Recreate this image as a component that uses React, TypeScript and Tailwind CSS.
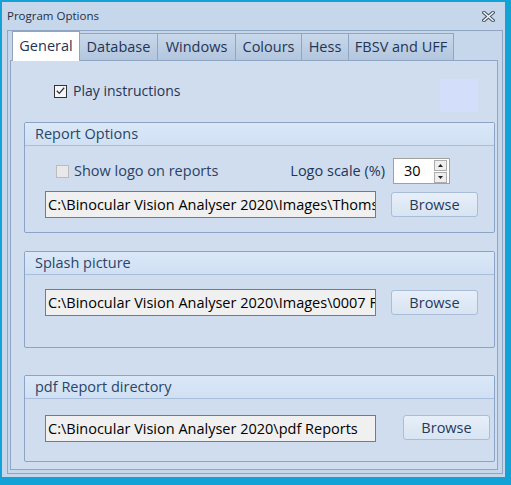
import type { ReactNode } from 'react'

function CloseGlyph() {
  return (
    <svg width="13" height="11" viewBox="0 0 13 11">
      <path d="M2 1.5 L11 9.5 M11 1.5 L2 9.5" stroke="#4d586c" strokeWidth="3.6" strokeLinecap="square" />
      <path d="M2 1.5 L11 9.5 M11 1.5 L2 9.5" stroke="#f4f6fa" strokeWidth="1.5" strokeLinecap="square" />
    </svg>
  )
}

function CheckBox({ checked, disabled }: { checked?: boolean; disabled?: boolean }) {
  return (
    <span
      className={`flex h-[13px] w-[13px] shrink-0 items-center justify-center border ${
        disabled ? 'border-[#bcbcbc] bg-[#e8e8e8]' : 'border-[#333333] bg-[#f4f6f9]'
      }`}
    >
      {checked && (
        <svg width="9" height="8" viewBox="0 0 9 8">
          <path d="M0.8 3.8 L3.3 6.4 L8.2 0.8" fill="none" stroke="#333333" strokeWidth="1.3" />
        </svg>
      )}
    </span>
  )
}

function PathBox({ value }: { value: string }) {
  return (
    <div className="h-[27px] w-[331px] shrink-0 overflow-hidden whitespace-nowrap border border-[#7a7a7a] bg-[#f0f0f0] pl-[2px] text-[14.5px] leading-[25px] text-black">
      {value}
    </div>
  )
}

function BrowseButton() {
  return (
    <button className="h-[25px] w-[87px] shrink-0 rounded-[3px] border border-[#a9bdd8] bg-gradient-to-b from-[#e7eff9] to-[#d8e4f2] text-[14.5px] leading-[23px] text-[#1f3a5e]">
      Browse
    </button>
  )
}

function Group({ title, className, children }: { title: string; className: string; children: ReactNode }) {
  return (
    <div className={`ml-[13px] w-[471px] rounded-[2px] border border-[#8ba3c5] bg-[#d0ddee] ${className}`}>
      <div className="h-[23px] border-b border-[#a8bedb] bg-gradient-to-b from-[#dae8f8] to-[#d0e0f3] pl-[10px] text-[14.5px] leading-[22px] text-[#2a4567]">
        {title}
      </div>
      {children}
    </div>
  )
}

const tabs = ['Database', 'Windows', 'Colours', 'Hess', 'FBSV and UFF']
const tabWidths: Record<string, string> = {
  Database: 'w-[78px]',
  Windows: 'w-[78px]',
  Colours: 'w-[66px]',
  Hess: 'w-[47px]',
  'FBSV and UFF': 'w-[105px]',
}

export default function App() {
  return (
    <div className="h-[485px] w-[511px] bg-[#12a2d6] pl-[2px] pt-[2px] [font-family:'Open_Sans',sans-serif]">
      <div className="flex h-[475px] w-[503px] flex-col bg-[#c7d7eb]">
        {/* title bar */}
        <div className="flex h-[28px] items-center justify-between pl-[5px] pr-[10px]">
          <span className="text-[11.5px] text-[#1f2f48]">Program Options</span>
          <CloseGlyph />
        </div>

        {/* tab control */}
        <div className="ml-[5px] flex h-[444px] w-[496px] flex-col border border-[#8fa5c4] pb-[2px] pl-[2px] pr-[3px]">
          <div className="flex h-[29px] items-end pl-[2px]">
            <div className="relative z-10 -mb-[1px] h-[30px] w-[68px] border border-b-0 border-[#8fa5c4] bg-white text-center text-[14.5px] leading-[28px] text-[#1f3554]">
              General
            </div>
            {tabs.map((t) => (
              <div
                key={t}
                className={`h-[27px] ${tabWidths[t]} border border-l-0 border-b-0 border-[#8fa5c4] bg-gradient-to-b from-[#c9d8eb] to-[#b2c6de] text-center text-[14.5px] leading-[26px] text-[#1f3554]`}
              >
                {t}
              </div>
            ))}
          </div>

          {/* page */}
          <div className="flex h-[410px] w-[488px] flex-col border border-[#8fa5c4] bg-[#d0ddee]">
            <div className="mt-[18px] flex h-[33px] items-start">
              <div className="ml-[43px] mt-[5px] flex items-center gap-[6px]">
                <CheckBox checked />
                <span className="text-[14px] leading-[14px] text-[#1f3556]">Play instructions</span>
              </div>
              <div className="ml-auto mr-[19px] h-[33px] w-[38px] bg-[#d2defa]" />
            </div>

            <Group title="Report Options" className="mt-[10px] h-[111px]">
              <div className="mt-[12px] flex h-[26px] items-center pl-[31px]">
                <CheckBox disabled />
                <span className="ml-[5px] text-[14.5px] text-[#2b4264]">Show logo on reports</span>
                <span className="ml-auto text-[14.5px] text-[#1f3556]">Logo scale (%)</span>
                <div className="ml-[8px] mr-[44px] flex h-[26px] w-[57px] items-center border border-[#a0a0a0] bg-white pl-[10px] pr-[2px]">
                  <span className="flex-1 text-[14.5px] text-black">30</span>
                  <div className="flex h-[23px] w-[13px] flex-col gap-[1px]">
                    <div className="flex flex-1 items-center justify-center border border-[#adadad] bg-[#eeeeee]">
                      <svg width="5" height="3" viewBox="0 0 5 3">
                        <path d="M0 3 L2.5 0 L5 3 Z" fill="#222" />
                      </svg>
                    </div>
                    <div className="flex flex-1 items-center justify-center border border-[#adadad] bg-[#eeeeee]">
                      <svg width="5" height="3" viewBox="0 0 5 3">
                        <path d="M0 0 L2.5 3 L5 0 Z" fill="#222" />
                      </svg>
                    </div>
                  </div>
                </div>
              </div>
              <div className="mt-[7px] flex items-center gap-[15px] pl-[20px]">
                <PathBox value="C:\Binocular Vision Analyser 2020\Images\Thoms" />
                <BrowseButton />
              </div>
            </Group>

            <Group title="Splash picture" className="mt-[18px] h-[97px]">
              <div className="mt-[14px] flex items-center gap-[15px] pl-[20px]">
                <PathBox value="C:\Binocular Vision Analyser 2020\Images\0007 Fl" />
                <BrowseButton />
              </div>
            </Group>

            <Group title="pdf Report directory" className="mt-[27px] h-[87px]">
              <div className="mt-[16px] flex items-start gap-[27px] pl-[20px]">
                <PathBox value="C:\Binocular Vision Analyser 2020\pdf Reports" />
                <BrowseButton />
              </div>
            </Group>
          </div>
        </div>
      </div>
    </div>
  )
}
